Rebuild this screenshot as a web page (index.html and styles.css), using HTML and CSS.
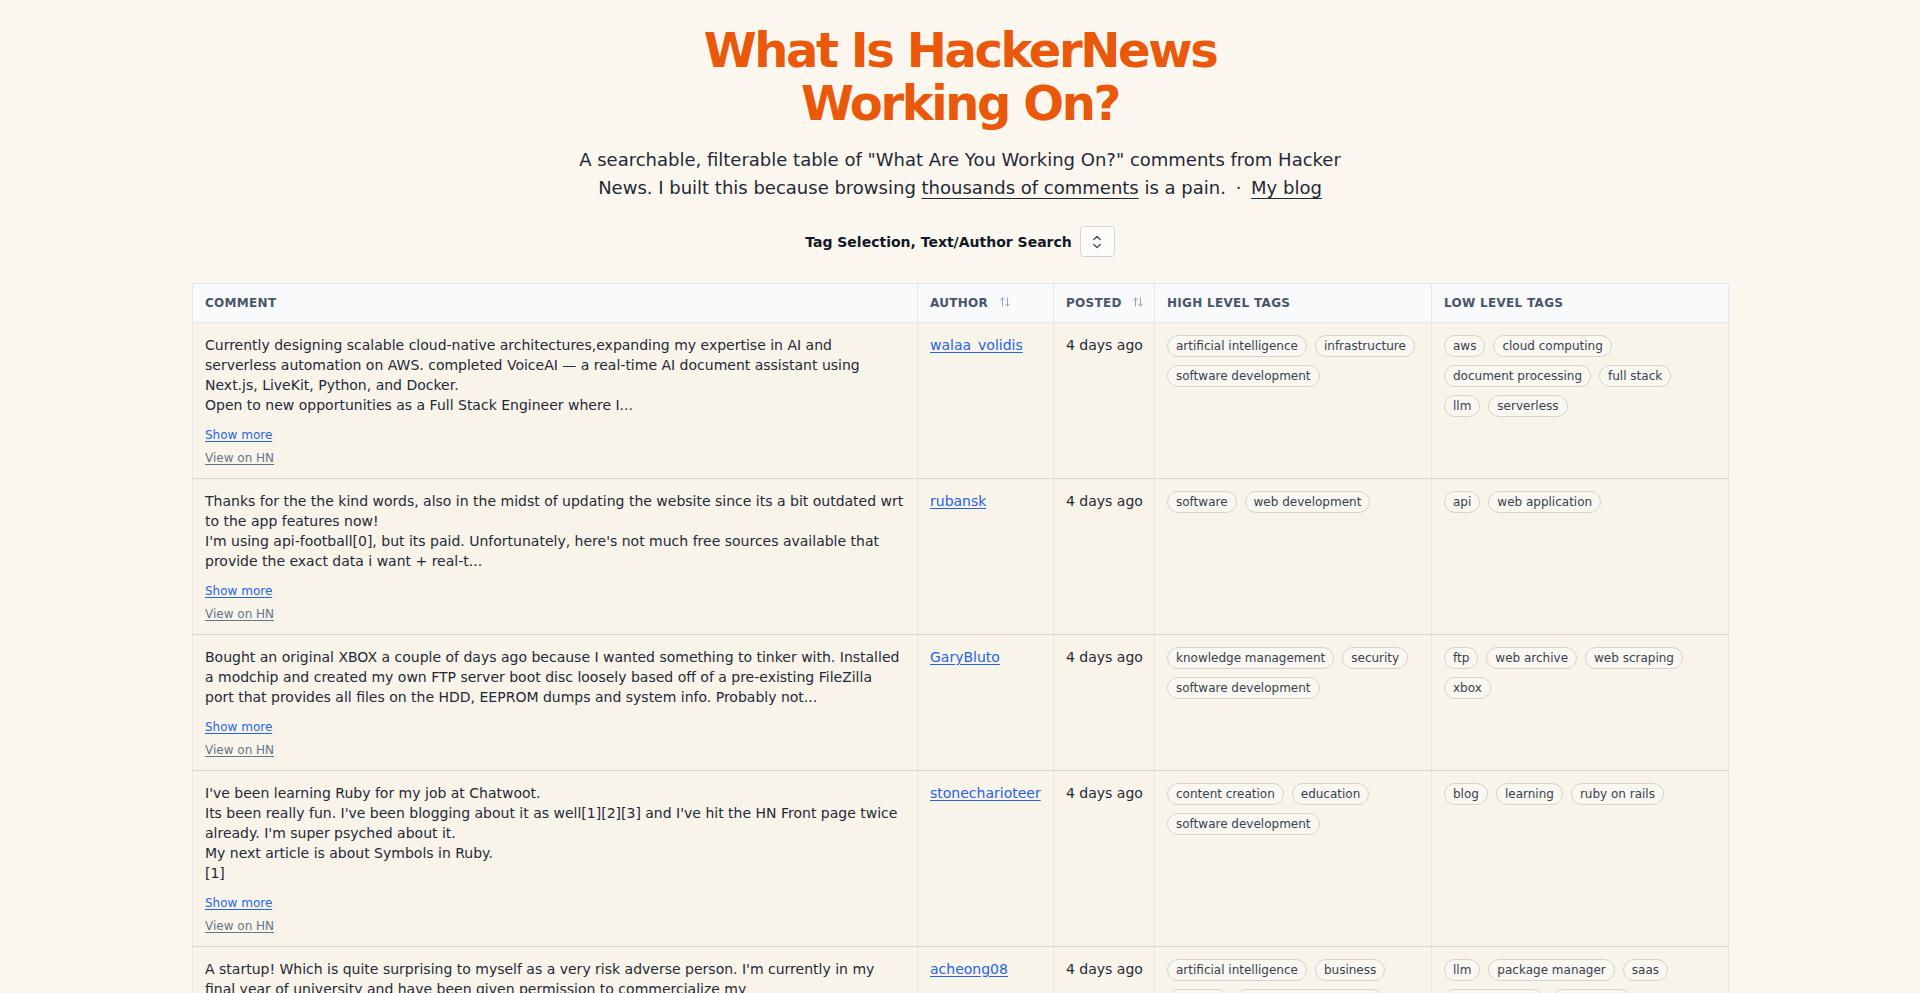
FILE: index.html
```html
<!DOCTYPE html>
<html lang="en">
<head>
<meta charset="utf-8">
<title>What Is HackerNews Working On?</title>
<link rel="stylesheet" href="styles.css">
</head>
<body>
<main class="page">
  <header class="intro">
    <h1 class="title">What Is HackerNews<br>Working On?</h1>
    <p class="lede">A searchable, filterable table of "What Are You Working On?" comments from Hacker News. I built this because browsing <a href="#" class="lede-link">thousands of comments</a> is a pain. <span class="sep">·</span> <a href="#" class="lede-link">My blog</a></p>
  </header>

  <div class="controls">
    <span class="controls-label">Tag Selection, Text/Author Search</span>
    <button class="toggle" type="button" aria-label="Toggle filters">
      <svg width="20" height="20" viewBox="0 0 24 24" fill="none" stroke="currentColor" stroke-width="1.5" stroke-linecap="round" stroke-linejoin="round"><path d="M8.25 15 12 18.75 15.75 15M8.25 9 12 5.25 15.75 9"/></svg>
    </button>
  </div>

  <table class="posts">
    <colgroup>
      <col class="col-comment">
      <col class="col-author">
      <col class="col-posted">
      <col class="col-high">
      <col class="col-low">
    </colgroup>
    <thead>
      <tr>
        <th>Comment</th>
        <th>Author <svg class="sort" width="12" height="12" viewBox="0 0 24 24" fill="none" stroke="currentColor" stroke-width="2" stroke-linecap="round" stroke-linejoin="round"><path d="m21 16-4 4-4-4M17 20V4M3 8l4-4 4 4M7 4v16"/></svg></th>
        <th>Posted <svg class="sort" width="12" height="12" viewBox="0 0 24 24" fill="none" stroke="currentColor" stroke-width="2" stroke-linecap="round" stroke-linejoin="round"><path d="m21 16-4 4-4-4M17 20V4M3 8l4-4 4 4M7 4v16"/></svg></th>
        <th>High Level Tags</th>
        <th>Low Level Tags</th>
      </tr>
    </thead>
    <tbody>
      <tr>
        <td>
          <p class="comment">Currently designing scalable cloud-native architectures,expanding my expertise in AI and serverless automation on AWS. completed VoiceAI — a real-time AI document assistant using Next.js, LiveKit, Python, and Docker.<br>Open to new opportunities as a Full Stack Engineer where I...</p>
          <div class="actions"><a href="#" class="more">Show more</a><a href="#" class="hn">View on HN</a></div>
        </td>
        <td><a href="#" class="author">walaa_volidis</a></td>
        <td class="posted">4 days ago</td>
        <td><div class="tags"><span class="tag">artificial intelligence</span><span class="tag">infrastructure</span><span class="tag">software development</span></div></td>
        <td class="low-tags"><div class="tags"><span class="tag">aws</span><span class="tag">cloud computing</span><span class="tag">document processing</span><span class="tag">full stack</span><span class="tag">llm</span><span class="tag">serverless</span></div></td>
      </tr>
      <tr>
        <td>
          <p class="comment">Thanks for the the kind words, also in the midst of updating the website since its a bit outdated wrt to the app features now!<br>I'm using api-football[0], but its paid. Unfortunately, here's not much free sources available that provide the exact data i want + real-t...</p>
          <div class="actions"><a href="#" class="more">Show more</a><a href="#" class="hn">View on HN</a></div>
        </td>
        <td><a href="#" class="author">rubansk</a></td>
        <td class="posted">4 days ago</td>
        <td><div class="tags"><span class="tag">software</span><span class="tag">web development</span></div></td>
        <td class="low-tags"><div class="tags"><span class="tag">api</span><span class="tag">web application</span></div></td>
      </tr>
      <tr>
        <td>
          <p class="comment">Bought an original XBOX a couple of days ago because I wanted something to tinker with. Installed a modchip and created my own FTP server boot disc loosely based off of a pre-existing FileZilla port that provides all files on the HDD, EEPROM dumps and system info. Probably not...</p>
          <div class="actions"><a href="#" class="more">Show more</a><a href="#" class="hn">View on HN</a></div>
        </td>
        <td><a href="#" class="author">GaryBluto</a></td>
        <td class="posted">4 days ago</td>
        <td><div class="tags"><span class="tag">knowledge management</span><span class="tag">security</span><span class="tag">software development</span></div></td>
        <td class="low-tags"><div class="tags"><span class="tag">ftp</span><span class="tag">web archive</span><span class="tag">web scraping</span><span class="tag">xbox</span></div></td>
      </tr>
      <tr>
        <td>
          <p class="comment">I've been learning Ruby for my job at Chatwoot.<br>Its been really fun. I've been blogging about it as well[1][2][3] and I've hit the HN Front page twice already. I'm super psyched about it.<br>My next article is about Symbols in Ruby.<br>[1]</p>
          <div class="actions"><a href="#" class="more">Show more</a><a href="#" class="hn">View on HN</a></div>
        </td>
        <td><a href="#" class="author">stonecharioteer</a></td>
        <td class="posted">4 days ago</td>
        <td><div class="tags"><span class="tag">content creation</span><span class="tag">education</span><span class="tag">software development</span></div></td>
        <td class="low-tags"><div class="tags"><span class="tag">blog</span><span class="tag">learning</span><span class="tag">ruby on rails</span></div></td>
      </tr>
      <tr>
        <td>
          <p class="comment">A startup! Which is quite surprising to myself as a very risk adverse person. I'm currently in my final year of university and have been given permission to commercialize my<br>research project, a package manager for local LLM tooling...</p>
          <div class="actions"><a href="#" class="more">Show more</a><a href="#" class="hn">View on HN</a></div>
        </td>
        <td><a href="#" class="author">acheong08</a></td>
        <td class="posted">4 days ago</td>
        <td><div class="tags"><span class="tag">artificial intelligence</span><span class="tag">business</span><span class="tag">startup</span><span class="tag">open source software</span></div></td>
        <td class="low-tags"><div class="tags"><span class="tag">llm</span><span class="tag">package manager</span><span class="tag">saas</span><span class="tag">reverse proxy</span><span class="tag">typescript</span></div></td>
      </tr>
    </tbody>
  </table>
</main>
</body>
</html>
```

FILE: styles.css
```css
* {
  box-sizing: border-box;
}

html,
body {
  margin: 0;
}

body {
  background: #fbf7ee;
  color: #1f2937;
  font-family: "DejaVu Sans", Verdana, sans-serif;
}

.page {
  max-width: 1536px;
  margin: 0 auto;
  padding-top: 24px;
}

/* Heading block */
.intro {
  text-align: center;
}

.title {
  margin: 0;
  font-size: 48px;
  line-height: 53px;
  font-weight: 700;
  letter-spacing: -0.05em;
  color: #ea580c;
}

.lede {
  max-width: 768px;
  margin: 16px auto 0;
  font-size: 18px;
  line-height: 28px;
  color: #1f2937;
}

.lede-link {
  color: inherit;
  text-decoration: underline;
  text-underline-offset: 4px;
}

.sep {
  margin: 0 4px;
}

/* Filter toggle row */
.controls {
  display: flex;
  justify-content: center;
  align-items: center;
  gap: 8px;
  margin: 24px 0 26px;
}

.controls-label {
  font-size: 14px;
  line-height: 20px;
  font-weight: 700;
  color: #111827;
}

.toggle {
  width: 35px;
  height: 31px;
  padding: 0;
  display: flex;
  align-items: center;
  justify-content: center;
  border: 1px solid #d1d5db;
  border-radius: 4px;
  background: #fdfcf8;
  color: #374151;
  cursor: pointer;
}

/* Comments table */
.posts {
  width: 100%;
  table-layout: fixed;
  border-collapse: collapse;
  border: 1px solid #e2e8f0;
}

.col-comment { width: 725px; }
.col-author { width: 136px; }
.col-posted { width: 101px; }
.col-high { width: 277px; }
.col-low { width: 297px; }

.posts th {
  padding: 11px 12px;
  background: #f8fafc;
  border: 1px solid #e2e8f0;
  text-align: left;
  font-size: 12px;
  line-height: 16px;
  font-weight: 700;
  letter-spacing: 0.025em;
  text-transform: uppercase;
  color: #475569;
  white-space: nowrap;
}

.sort {
  margin-left: 6px;
  vertical-align: -1px;
  color: #94a3b8;
}

.posts td {
  padding: 12px;
  vertical-align: top;
  background: #f9f4ea;
  border-left: 1px solid #e5e7eb;
  border-right: 1px solid #e5e7eb;
  border-bottom: 1px solid #dbd6cd;
  font-size: 14px;
  line-height: 20px;
  color: #1f2937;
}

.posts td.posted {
  white-space: nowrap;
}

.posts td.low-tags {
  padding-right: 16px;
}

.comment {
  margin: 0;
}

.actions {
  margin-top: 12px;
  font-size: 12px;
  line-height: 16px;
}

.actions a {
  display: table;
  text-decoration: underline;
  text-underline-offset: 2px;
}

.more {
  color: #2563eb;
}

.hn {
  margin-top: 7px;
  color: #64748b;
}

.author {
  color: #2563eb;
  text-decoration: underline;
  text-underline-offset: 2px;
}

.tags {
  display: flex;
  flex-wrap: wrap;
  gap: 8px;
}

.tag {
  display: inline-block;
  padding: 2px 8px;
  border: 1px solid #d6d3d1;
  border-radius: 9999px;
  background: #faf7f0;
  font-size: 12px;
  line-height: 16px;
  color: #374151;
  white-space: nowrap;
}
```
